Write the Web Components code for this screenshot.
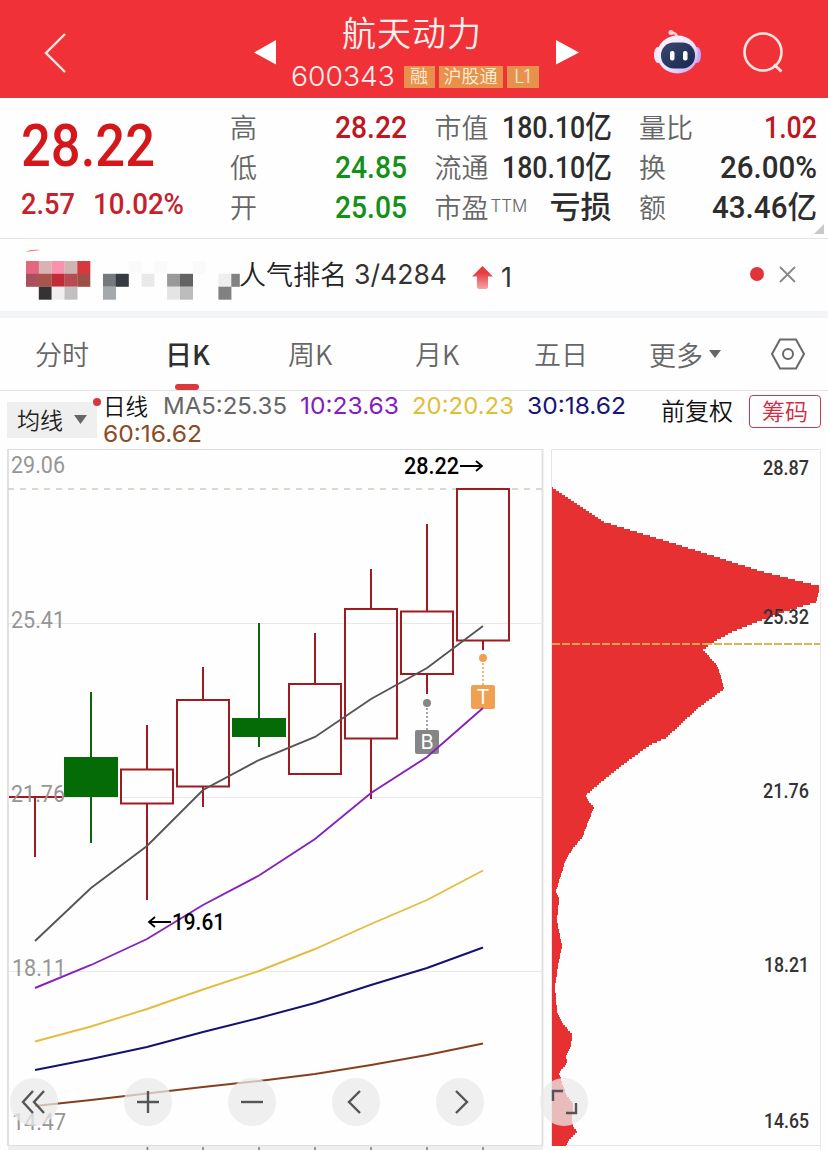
<!DOCTYPE html>
<html lang="zh-CN">
<head>
<meta charset="utf-8">
<title>航天动力 600343</title>
<style>
    body {
        margin: 0;
        width: 828px;
        height: 1150px;
        overflow: hidden;
        background: #fefefe;
        font-family: Inter, "Noto Sans CJK SC", sans-serif;
        color: #333;
    }
</style>
</head>
<body>
<stock-app></stock-app>

<script>
// Base class: puts the element's styles and markup in its shadow root
class BaseElement extends HTMLElement {
    connectedCallback() {
        if (this.shadowRoot) return;
        this.attachShadow({ mode: 'open' });
        this.shadowRoot.innerHTML = `
            <style>:host { display: block; box-sizing: border-box; } * { box-sizing: border-box; } svg { display: block; }</style>
            ${this.render()}
        `;
    }
}

class StockApp extends BaseElement {
    render() {
        return `
            <stock-header></stock-header>
            <quote-panel></quote-panel>
            <rank-bar></rank-bar>
            <period-tabs></period-tabs>
            <ma-legend></ma-legend>
            <chart-area></chart-area>
        `;
    }
}

class StockHeader extends BaseElement {
    render() {
        return `
            <style>
                :host { display: grid; grid-template-columns: 254px 325px 1fr; height: 98px; background: #f03238; color: #fff0ee; border-bottom: 1px solid #c9444b; }
                .back { padding: 32px 0 0 43px; }
                .middle { display: flex; justify-content: space-between; padding-top: 11px; }
                .arrow { margin-top: 28px; }
                .name { height: 43px; line-height: 41px; font-size: 34px; font-weight: 350; letter-spacing: 1px; text-align: center; padding-right: 6px; font-family: "Noto Sans CJK SC", sans-serif; }
                .code { display: flex; align-items: center; height: 22px; margin-top: 12px; }
                .tag { background: #e8914c; color: #ffeed8; height: 22px; line-height: 21px; font-size: 18px; text-align: center; margin-left: 4px; font-weight: 350; }
                .info { width: 249px; flex: none; margin: 0 2px 0 0; }
                .tools { display: flex; padding: 29px 0 0 73px; gap: 39px; }
            </style>
            <div class="back"><svg width="24" height="42"><path d="M22 2 L3 21 L22 40" fill="none" stroke="#ffe8e4" stroke-width="2.4"/></svg></div>
            <div class="middle">
                <svg class="arrow" width="22" height="26"><path d="M0 13.500 L22 1 V25.500Z" fill="#fff"/></svg>
                <div class="info">
                    <div class="name">航天动力</div>
                    <div class="code">
                        <fit-text len="104" size="27" weight="350" high="22">600343</fit-text>
                        <span class="tag" style="width:31px;margin-left:9px">融</span>
                        <span class="tag" style="width:64px">沪股通</span>
                        <span class="tag" style="width:32px">L1</span>
                    </div>
                </div>
                <svg class="arrow" width="23" height="26"><path d="M23 13.500 L0 1 V25.500Z" fill="#fff"/></svg>
            </div>
            <div class="tools">
                <svg width="52" height="46" viewBox="0 0 52 46">
                    <defs>
                        <linearGradient id="shell" x1="0" y1="0" x2="1" y2="1"><stop offset="0" stop-color="#fff5ff"/><stop offset=".55" stop-color="#eee5ff"/><stop offset="1" stop-color="#c49af2"/></linearGradient>
                        <linearGradient id="face" x1="0" y1="0" x2="1" y2="1"><stop offset="0" stop-color="#3b4970"/><stop offset="1" stop-color="#17264d"/></linearGradient>
                    </defs>
                    <path d="M25 9 Q25 4 20 3.500" fill="none" stroke="#f9cfdf" stroke-width="2.500"/>
                    <circle cx="19" cy="3.500" r="2.500" fill="#ffd5dc"/>
                    <ellipse cx="6" cy="26" rx="4" ry="8" fill="#efe6ff"/>
                    <ellipse cx="45" cy="26" rx="4" ry="8" fill="#c7a4ff"/>
                    <ellipse cx="25.500" cy="25.500" rx="20.500" ry="19" fill="url(#shell)"/>
                    <rect x="9" y="13.500" width="34" height="26" rx="12.500" fill="url(#face)"/>
                    <rect x="18" y="22" width="4.500" height="9.500" rx="2" fill="#fff"/>
                    <rect x="31" y="22" width="4.500" height="9.500" rx="2" fill="#fff"/>
                </svg>
                <svg width="42" height="46"><circle cx="20" cy="23" r="18.500" fill="none" stroke="#ffe4df" stroke-width="2.600"/><path d="M31 35.500 L38.500 42.500" stroke="#ffe4df" stroke-width="3"/></svg>
            </div>
        `;
    }
}

const quoteRows = [
    ['高', '28.22', 72, 'up', '市值', '180.10亿', 110, '', '量比', '1.02', 53, 'up'],
    ['低', '24.85', 72, 'down', '流通', '180.10亿', 110, '', '换', '26.00%', 97, ''],
    ['开', '25.05', 72, 'down', '市盈<small>TTM</small>', '亏损', 62, '', '额', '43.46亿', 105, '']
];

class QuotePanel extends BaseElement {
    render() {
        const cells = quoteRows.map((r) => [0, 4, 8].map((i) => `
            <div class="cell"><span>${r[i]}</span><fit-text class="${r[i + 3]}" len="${r[i + 2]}" size="31" weight="500" font="Roboto">${r[i + 1]}</fit-text></div>
        `).join('')).join('');
        return `
            <style>
                :host { position: relative; display: flex; height: 141px; border-bottom: 1px solid #e4e4e4; padding: 8px 11px 0 21px; }
                .price { width: 209px; flex: none; color: #d3171b; }
                .price > fit-text { margin-top: 10px; }
                .change { display: flex; gap: 18px; margin-top: 10px; color: #c6202a; }
                .grid { display: grid; grid-template-columns: 177px 177px 178px; grid-auto-rows: 40px; column-gap: 27.5px; }
                .cell { display: flex; justify-content: space-between; align-items: center; font-size: 27px; font-weight: 350; color: #666; white-space: nowrap; font-family: "Noto Sans CJK SC", sans-serif; }
                .cell fit-text { color: #2d2d2d; margin-top: 4px; }
                .cell .up { color: #c0161f; }
                .cell .down { color: #129018; }
                small { font: 300 17px Inter; vertical-align: 6px; margin-left: 2px; }
                .corner { position: absolute; right: 4px; bottom: 4px; }
            </style>
            <div class="price">
                <fit-text len="134" size="60" weight="500" font="Roboto" high="60">28.22</fit-text>
                <div class="change">
                    <fit-text len="54" size="30" weight="500" font="Roboto">2.57</fit-text>
                    <fit-text len="91" size="30" weight="500" font="Roboto">10.02%</fit-text>
                </div>
            </div>
            <div class="grid">${cells}</div>
            <svg class="corner" width="10" height="10"><path d="M10 0 V10 H0Z" fill="#c8c8c8"/></svg>
        `;
    }
}

// Censored icon and title: [column, row, colour]
const mosaic = [
    [0, 0, '#e3677f'], [1, 0, '#d9b3b3'], [2, 0, '#f892ae'], [3, 0, '#cdb5b1'], [4, 0, '#d8373f'],
    [0, 1, '#a9505e'], [1, 1, '#aa554b'], [2, 1, '#c12c38'], [3, 1, '#b74c52'], [4, 1, '#9c5048'],
    [1, 2, '#333'], [2, 2, '#f0eeee'], [3, 2, '#c0c0c0'],
    [6, 1, '#75797c'], [7, 1, '#373c40'], [6, 2, '#a4a9ac'], [9, 1, '#e9e9e9'],
    [11, 1, '#999'], [12, 1, '#636363'], [11, 2, '#e4e4e4'], [12, 2, '#bcbcbc'],
    [15, 1, '#eee'], [16, 1, '#828282'], [15, 2, '#818181'],
    [8, 0, '#fafafa'], [10, 0, '#fafafa'], [13, 0, '#fafafa']
];

class RankBar extends BaseElement {
    render() {
        const size = 12.83;
        const blocks = mosaic.map(([c, r, fill]) =>
            `<rect x="${(c * size).toFixed(1)}" y="${(12 + r * size).toFixed(1)}" width="${c === 16 ? 8.5 : 13}" height="13" fill="${fill}"/>`).join('');
        return `
            <style>
                :host { display: flex; height: 79px; padding-left: 26px; border-bottom: 7px solid #f3f4f5; }
                .blocks { margin-top: 10px; flex: none; }
                .title { font: 350 27px/70px "Noto Sans CJK SC", sans-serif; margin-left: -1px; color: #222; }
                .rank { margin: 16px 0 0 7px; }
                .rise { margin: 27px 8px 0 25px; }
                .one { font-size: 27px; margin-top: 22px; font-weight: 400; }
                .dot { width: 14px; height: 14px; border-radius: 50%; background: #e1343a; margin: 28px 15px 0 auto; }
                .close { margin: 27px 32px 0 0; }
            </style>
            <svg class="blocks" width="214" height="52"><path d="M0 3 Q5 0 15 1 Q7 1.500 0 3" fill="#e25b50"/>${blocks}</svg>
            <span class="title">人气排名</span>
            <fit-text class="rank" len="93" size="27" weight="400" high="40">3/4284</fit-text>
            <svg class="rise" width="21" height="24"><defs><linearGradient id="g" x1="0" y1="0" x2="0" y2="1"><stop offset=".3" stop-color="#e63d41"/><stop offset="1" stop-color="#f4a8a8"/></linearGradient></defs><path d="M10.500 0 L21 10.500 H16 V21 Q16 23 14 23 H7 Q5 23 5 21 V10.500 H0Z" fill="url(#g)"/></svg>
            <span class="one">1</span>
            <div class="dot"></div>
            <svg class="close" width="17" height="17"><path d="M1 1 L16 16 M16 1 L1 16" stroke="#888" stroke-width="1.800"/></svg>
        `;
    }
}

class PeriodTabs extends BaseElement {
    render() {
        return `
            <style>
                :host { display: grid; grid-template-columns: 131px 122px 127px 120px 114px 157px 57px; height: 73px; border-bottom: 1px solid #e4e4e4; font: 350 27px/71px "Noto Sans CJK SC", sans-serif; color: #666; }
                span { white-space: nowrap; }
                .on { font-weight: 500; color: #2f2f2f; height: 72px; }
                .on::after { content: ""; display: block; width: 24px; height: 6px; border-radius: 3px; background: #da3a3d; margin: -5px 0 0 10px; }
                .more { display: flex; align-items: center; gap: 6px; }
                .gear { margin-top: 20px; }
            </style>
            <span style="padding-left:35px">分时</span>
            <span class="on" style="padding-left:34px">日K</span>
            <span style="padding-left:35px">周K</span>
            <span style="padding-left:35px">月K</span>
            <span style="padding-left:34px">五日</span>
            <span class="more" style="padding-left:35px">更多<svg width="12" height="8"><path d="M0 0 H12 L6 8Z" fill="#666"/></svg></span>
            <svg class="gear" width="36" height="32"><g fill="none" stroke="#686868" stroke-width="2"><path d="M1 16 L9 1.500 H25 L33 16 L25 30.500 H9Z"/><circle cx="17" cy="16" r="5"/></g></svg>
        `;
    }
}

class MaLegend extends BaseElement {
    render() {
        return `
            <style>
                :host { display: flex; height: 57px; font: 350 23px/28px "Noto Sans CJK SC", sans-serif; color: #111; }
                .pick { position: relative; display: flex; align-items: center; gap: 11px; width: 90px; height: 36px; margin: 11px 0 0 7px; padding: 0 0 2px 10px; background: #efefef; color: #222; }
                .pick svg { margin-top: 1px; }
                .pick::after { content: ""; position: absolute; right: -4px; top: -4px; width: 8px; height: 8px; border-radius: 50%; background: #d8353c; }
                .values { display: flex; flex-wrap: wrap; align-content: flex-start; gap: 0 13px; width: 550px; margin: 1px 0 0 6px; }
                .values span { width: 47px; height: 28px; line-height: 26px; font-size: 22.5px; }
                .adjust { margin: 5px 0 0 8px; font-size: 24px; width: 88px; }
                .chips { width: 72px; height: 33px; margin-top: 4px; border: 1.500px solid #c53b4c; border-radius: 4px; color: #d32c40; text-align: center; line-height: 28px; }
            </style>
            <div class="pick">均线<svg width="13" height="9"><path d="M0 0 H13 L6.500 9Z" fill="#666"/></svg></div>
            <div class="values">
                <span>日线</span>
                <fit-text len="124" size="23.500" weight="400" high="28" style="color:#666">MA5:25.35</fit-text>
                <fit-text len="99" size="23.500" weight="400" high="28" style="color:#851bc4">10:23.63</fit-text>
                <fit-text len="102" size="23.500" weight="400" high="28" style="color:#e0bf36">20:20.23</fit-text>
                <fit-text len="99" size="23.500" weight="400" high="28" style="color:#191479">30:18.62</fit-text>
                <fit-text len="99" size="23.500" weight="400" high="28" style="color:#8c4a25">60:16.62</fit-text>
            </div>
            <span class="adjust">前复权</span>
            <div class="chips">筹码</div>
        `;
    }
}

class ChartArea extends BaseElement {
    render() {
        return `
            <style>
                :host { position: relative; display: flex; height: 702px; }
                kline-chart { width: 547px; }
                chip-chart { width: 281px; }
                .controls { position: absolute; left: 10px; top: 630px; display: flex; gap: 56px; }
            </style>
            <kline-chart></kline-chart>
            <chip-chart></chip-chart>
            <div class="controls">
                <round-button style="margin-right:10px" icon="M23 13 L13 24 L23 35 M34 13 L24 24 L34 35"></round-button>
                <round-button icon="M13 24 H35 M24 13 V35"></round-button>
                <round-button icon="M13 24 H35"></round-button>
                <round-button icon="M28 13 L17 24 L28 35"></round-button>
                <round-button icon="M20 13 L31 24 L20 35"></round-button>
                <round-button icon="M13 23 V13 H23 M36 25 V35 H26"></round-button>
            </div>
        `;
    }
}

class RoundButton extends BaseElement {
    render() {
        return `
            <style>:host { width: 48px; height: 48px; border-radius: 50%; background: rgba(233, 233, 233, .75); }</style>
            <svg width="48" height="48"><path d="${this.getAttribute('icon')}" fill="none" stroke="#555" stroke-width="2.400"/></svg>
        `;
    }
}

// x, open/close top, open/close bottom, high, low, falling
const candles = [
    [91, 757, 797, 692, 843, true],
    [147, 769.5, 803.5, 725, 900],
    [203, 700, 786.5, 667, 807],
    [259, 718, 737, 623, 747, true],
    [315, 684, 774, 633, 774],
    [371, 609, 738.5, 569, 799],
    [427, 611.5, 674, 524, 694],
    [483, 489, 640.5, 489, 650]
];

const averages = {
    '#555558': [941, 888, 846, 790, 760, 737, 699, 668, 626],
    '#8620c0': [988, 965, 939, 905, 875.5, 839, 793, 757, 708],
    '#e4bd3f': [1041.5, 1026.5, 1009, 989.5, 971, 949, 924, 900, 870.5],
    '#15116e': [1070, 1059, 1047, 1032, 1018, 1003, 985, 968, 947.5],
    '#853f1c': [1106, 1100, 1093.5, 1087, 1081, 1074, 1065, 1055, 1043.5]
};

const priceText = (x, y, text, len, size, fill, weight = 400) =>
    `<text x="${x}" y="${y}" textLength="${len}" lengthAdjust="spacingAndGlyphs" font-family="Roboto" font-size="${size}" font-weight="${weight}" fill="${fill}">${text}</text>`;

class KlineChart extends BaseElement {
    render() {
        const bars = candles.map(([x, top, bottom, high, low, falling]) => falling
            ? `<path d="M${x} ${high} V${low}" stroke="#0b640e" stroke-width="2"/><rect x="${x - 27}" y="${top}" width="54" height="${bottom - top}" fill="#056b06"/>`
            : `<path d="M${x} ${high} V${top} M${x} ${bottom} V${low}" stroke="#a01b20" stroke-width="2"/><rect x="${x - 26}" y="${top}" width="52" height="${bottom - top}" fill="none" stroke="#a01b20" stroke-width="2"/>`
        ).join('');
        const lines = Object.entries(averages).map(([color, ys]) =>
            `<polyline points="${ys.map((y, i) => `${35 + i * 56},${y}`).join(' ')}" fill="none" stroke="${color}" stroke-width="1.900"/>`).join('');
        const marker = (x, y, letter, color) => `
            <circle cx="${x}" cy="${y}" r="4" fill="${color}"/>
            <path d="M${x} ${y + 5} V${y + 27}" stroke="${color}" stroke-width="1.500" stroke-dasharray="2 2"/>
            <rect x="${x - 12}" y="${y + 27}" width="24" height="24" rx="2" fill="${color}"/>
            <text x="${x}" y="${y + 46}" text-anchor="middle" font-family="Inter" font-size="20" fill="#fff">${letter}</text>`;
        return `
            <svg width="547" height="702" viewBox="0 448 547 702">
                <rect x="8" y="1146" width="535" height="4" fill="#eee"/>
                <path d="M8 623.500 H542 M8 797.500 H542 M8 971.500 H542" stroke="#e8e8e8"/>
                <path d="M8 449.500 H542 M8 1145.500 H542" stroke="#ddd"/>
                <path d="M8 449 V1146 M542.500 449 V1146" stroke="#e2e2e4" stroke-width="2"/>
                <path d="M147.500 1147 V1150 M203 1147 V1150 M259 1147 V1150 M315 1147 V1150 M371 1147 V1150 M427 1147 V1150 M483 1147 V1150" stroke="#777" stroke-width="1.500"/>
                <path d="M9 797 H62 M35 797 V857" stroke="#a01b20" stroke-width="2"/>
                <path d="M8 489 H542" stroke="#d2cabd" stroke-width="1.300" stroke-dasharray="6 6"/>
                ${bars}
                ${priceText(11, 473, '29.06', 54, 24, '#969696')}
                ${priceText(11, 628, '25.41', 54, 24, '#969696')}
                ${priceText(11, 802, '21.76', 54, 24, '#969696')}
                ${priceText(12, 976, '18.11', 54, 24, '#969696')}
                ${priceText(12, 1130, '14.47', 54, 24, '#969696')}
                ${marker(427, 703, 'B', '#868686')}
                ${marker(483, 658, 'T', '#f0a050')}
                ${lines}
                ${priceText(404, 474, '28.22', 55, 23, '#000', 500)}
                <path d="M460 466 H482 M476 461 L482 466 L476 471" fill="none" stroke="#000" stroke-width="1.800"/>
                ${priceText(172, 930, '19.61', 53, 23, '#000', 500)}
                <path d="M171 922 H149 M155 917 L149 922 L155 927" fill="none" stroke="#000" stroke-width="1.800"/>
            </svg>
        `;
    }
}

// Outline of the chip distribution, from the highest price to the lowest
const profile = [
    [553, 487], [562, 493], [604, 521], [666, 540], [720, 557], [760, 570], [819, 585], [819, 591], [816, 601],
    [790, 609], [762, 619], [732, 631], [712, 642], [703, 649], [716, 663], [721, 675], [724, 688], [697, 708],
    [666, 737], [650, 744], [624, 763], [605, 778], [586, 794], [588, 800], [594, 806], [582, 837], [574, 846],
    [566, 858], [556, 890], [559, 898], [557, 920], [562, 945], [558, 965], [555, 985], [557, 1010], [562, 1022],
    [572, 1033], [571, 1045], [566, 1056], [567, 1062], [559, 1072], [562, 1082], [566, 1093], [573, 1103],
    [572, 1120], [573, 1125], [577, 1131], [568, 1140], [565, 1146]
];

class ChipChart extends BaseElement {
    render() {
        let d = 'M552 487';
        for (let y = 487; y < 1146; y += 2) {
            const i = profile.findIndex((p, n) => n > 0 && p[1] > y);
            const [x0, y0] = profile[i - 1];
            const [x1, y1] = profile[i];
            d += `H${Math.round(x0 + (x1 - x0) * (y - y0) / (y1 - y0))}V${Math.min(y + 2, 1146)}`;
        }
        d += 'H552Z';
        return `
            <svg width="281" height="702" viewBox="547 448 281 702">
                <path d="M551.500 1145.500 V449.500 H820.500 V1150 M551 1145.500 H820" fill="none" stroke="#e6e6e8"/>
                <path d="${d}" fill="#e73032" shape-rendering="crispEdges"/>
                <path d="M552 644 H704" stroke="#f6a050" stroke-width="2" stroke-dasharray="8 2"/>
                <path d="M704 644 H820" stroke="#d9b54f" stroke-width="2" stroke-dasharray="8 2"/>
                ${priceText(763, 475, '28.87', 46, 20, '#333', 500)}
                ${priceText(763, 624, '25.32', 46, 20, '#333', 500)}
                ${priceText(763, 798, '21.76', 46, 20, '#333', 500)}
                ${priceText(764, 972, '18.21', 45, 20, '#333', 500)}
                ${priceText(764, 1128, '14.65', 45, 20, '#333', 500)}
            </svg>
        `;
    }
}

// Text scaled horizontally to the width given in len
class FitText extends HTMLElement {
    connectedCallback() {
        if (this.shadowRoot) return;
        const len = this.getAttribute('len');
        const size = this.getAttribute('size');
        const high = this.getAttribute('high') || 36;
        this.attachShadow({ mode: 'open' }).innerHTML = `
            <style>
                :host { display: block; flex: none; width: ${len}px; height: ${high}px; }
                span { display: inline-block; white-space: nowrap; transform-origin: 0 50%; font: ${this.getAttribute('weight')} ${size}px/${high}px ${this.getAttribute('font') || 'Inter'}, "Noto Sans CJK SC", sans-serif; vertical-align: top; }
            </style>
            <span><slot></slot></span>
        `;
        const span = this.shadowRoot.querySelector('span');
        span.style.transform = `scaleX(${len / span.getBoundingClientRect().width})`;
    }
}

customElements.define('stock-app', StockApp);
customElements.define('stock-header', StockHeader);
customElements.define('quote-panel', QuotePanel);
customElements.define('rank-bar', RankBar);
customElements.define('period-tabs', PeriodTabs);
customElements.define('ma-legend', MaLegend);
customElements.define('chart-area', ChartArea);
customElements.define('round-button', RoundButton);
customElements.define('kline-chart', KlineChart);
customElements.define('chip-chart', ChipChart);
customElements.define('fit-text', FitText);
</script>
</body>
</html>
